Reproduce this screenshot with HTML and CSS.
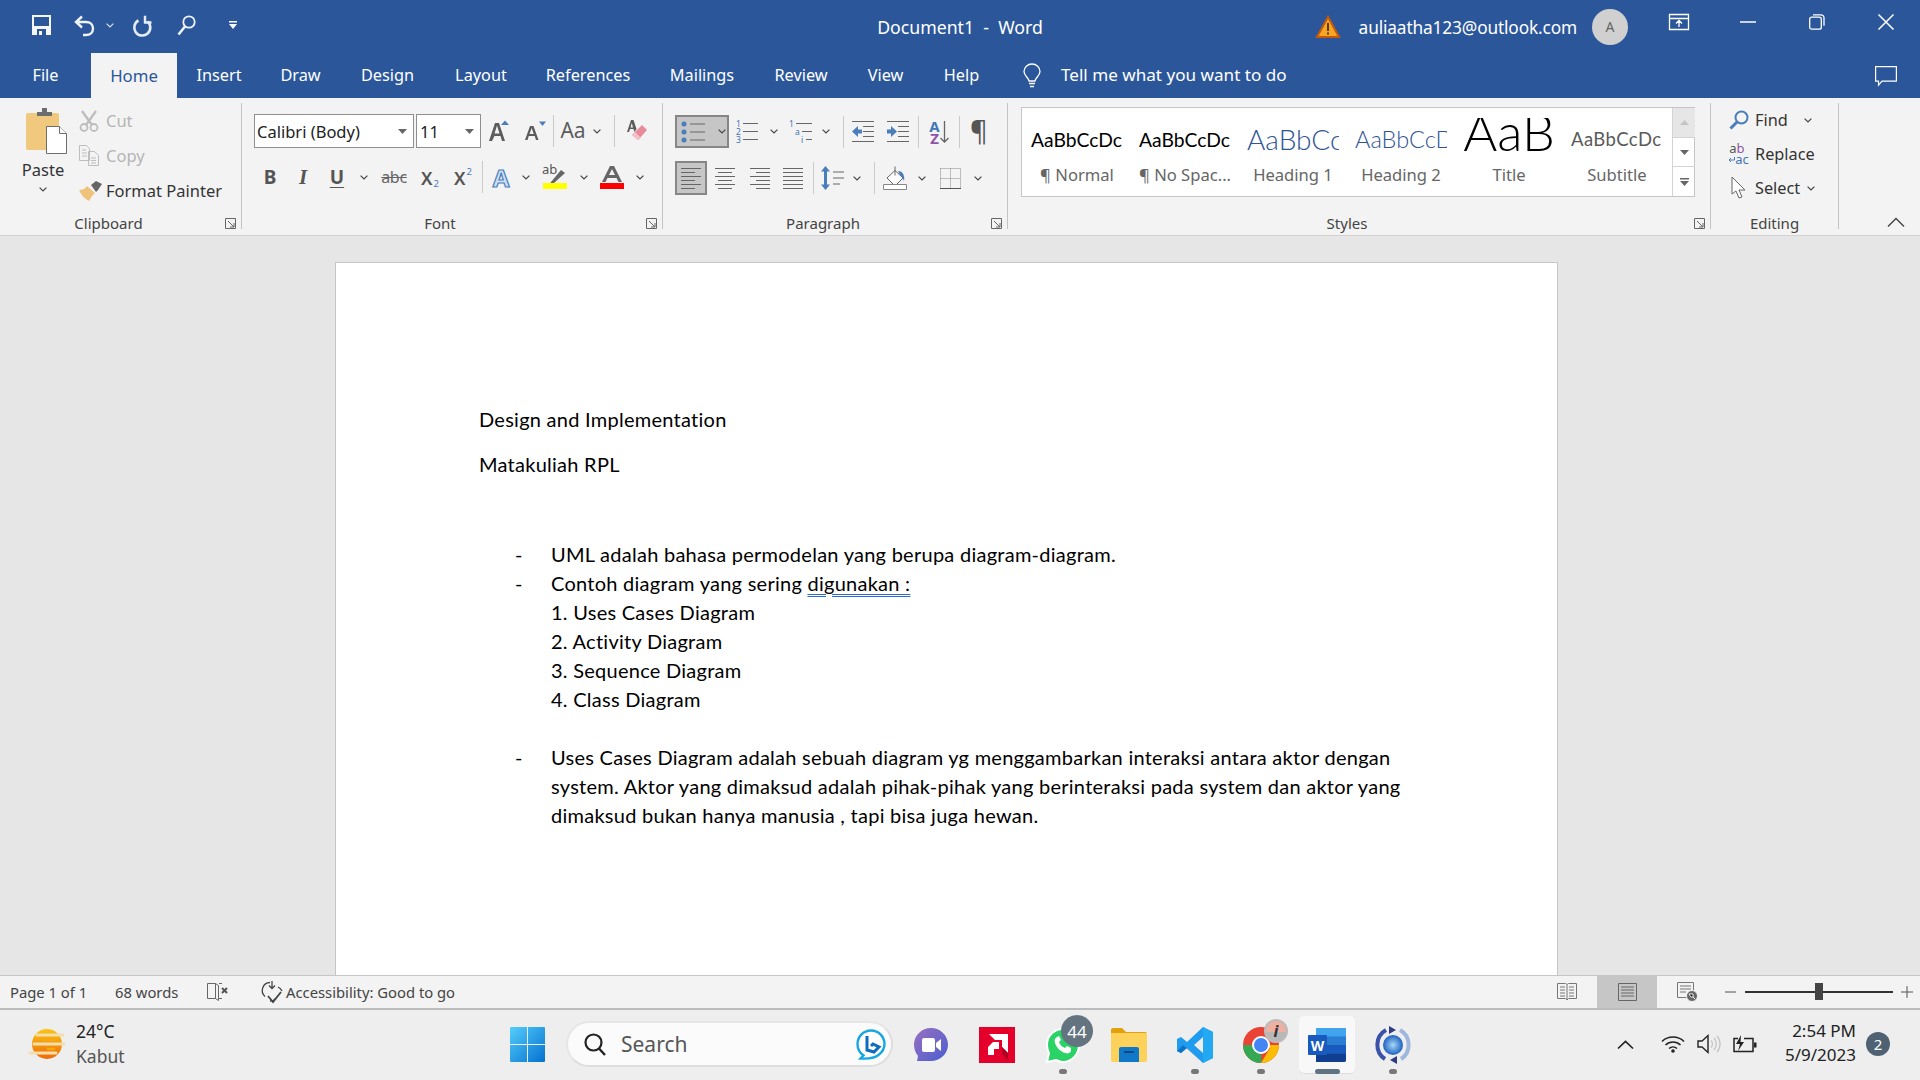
FILE: index.html
```html
<!DOCTYPE html>
<html lang="en">
<head>
<meta charset="utf-8">
<title>Document1 - Word</title>
<link rel="stylesheet" href="styles.css">
</head>
<body>
<svg class="sprite" aria-hidden="true">
  <symbol id="chev" viewBox="0 0 8 5"><path d="M.6.6 4 4 7.4.6" fill="none" stroke="#444" stroke-width="1.2"/></symbol>
  <symbol id="launch" viewBox="0 0 11 11"><path d="M.5 10.5V.5h10v10zM3 3l6 6M9 5v4H5" fill="none" stroke="#666"/></symbol>
  <symbol id="tri" viewBox="0 0 9 5"><path d="M0 0h9L4.5 5z" fill="#666"/></symbol>
</svg>

<header class="titlebar">
  <div class="title-row">
    <div class="qat">
      <svg width="19" height="20" viewBox="0 0 19 20"><path d="M0 0h19v20H0z" fill="#f4f6fa"/><path d="M2 2h15v9H2z" fill="#2b579a"/><path d="M5 14h9v6H5z" fill="#2b579a"/><path d="M7 16h3v4H7z" fill="#f4f6fa"/></svg>
      <svg class="q-undo" width="21" height="21" viewBox="0 0 21 21"><path d="M8 1.500 2 7l6 5.500M2 7h10c4 0 7 2.500 7 6.500S16 20 12 20H9" fill="none" stroke="#f0f3f9" stroke-width="2.400"/></svg>
      <svg class="q-chevw" width="8" height="5" viewBox="0 0 8 5"><path d="M.6.6 4 4 7.400.6" fill="none" stroke="#dce6f4" stroke-width="1.100"/></svg>
      <svg class="q-redo" width="20" height="21" viewBox="0 0 20 21"><path d="M6.500 5.500A8 8 0 1 0 15.500 6.500" fill="none" stroke="#e6ecf6" stroke-width="2.600"/><path d="M13 .8v6.700h6.500" fill="none" stroke="#e6ecf6" stroke-width="2.400"/></svg>
      <svg class="q-find" width="19" height="21" viewBox="0 0 19 21"><circle cx="12" cy="7" r="5.700" fill="none" stroke="#f0f3f9" stroke-width="1.800"/><path d="M8 11.500 1.500 19.500" stroke="#f0f3f9" stroke-width="2.600"/></svg>
      <svg class="q-more" width="8" height="8" viewBox="0 0 8 8"><path d="M0 0h8v1.500H0zM0 3h8L4 8z" fill="#fff"/></svg>
    </div>
    <div class="doc-title">Document1&nbsp; -&nbsp; Word</div>
    <div class="account">
      <svg class="warn" width="24" height="22" viewBox="0 0 24 22"><path d="M12 1 23 21H1z" fill="#f5a623" stroke="#c8590b" stroke-width="2"/><path d="M11 7h2v8h-2zM11 16.500h2v2h-2z" fill="#5a3a12"/></svg>
      <span class="email">auliaatha123@outlook.com</span>
      <span class="avatar">A</span>
      <span class="win-btn"><svg width="20" height="16" viewBox="0 0 20 16"><path d="M.5 .5h19v15H.5zM0 4.500h20M10 13V7M7 9.500l3-3 3 3" fill="none" stroke="#fff" stroke-width="1.300"/></svg></span>
      <span class="win-btn"><svg width="16" height="2" viewBox="0 0 16 2"><path d="M0 1h16" stroke="#fff" stroke-width="1.500"/></svg></span>
      <span class="win-btn"><svg width="16" height="16" viewBox="0 0 16 16"><rect x=".7" y="3.200" width="11.600" height="12" rx="2" fill="none" stroke="#fff" stroke-width="1.300"/><path d="M4 .8h8a3 3 0 0 1 3 3v8" fill="none" stroke="#fff" stroke-width="1.300"/></svg></span>
      <span class="win-btn"><svg width="16" height="16" viewBox="0 0 16 16"><path d="M.5.5l15 15M15.500.5l-15 15" stroke="#fff" stroke-width="1.500"/></svg></span>
    </div>
  </div>
  <nav class="tab-row">
    <span class="tab tab-file">File</span>
    <span class="tab tab-home">Home</span>
    <span class="tab tab-insert">Insert</span>
    <span class="tab tab-draw">Draw</span>
    <span class="tab tab-design">Design</span>
    <span class="tab tab-layout">Layout</span>
    <span class="tab tab-refs">References</span>
    <span class="tab tab-mail">Mailings</span>
    <span class="tab tab-review">Review</span>
    <span class="tab tab-view">View</span>
    <span class="tab tab-help">Help</span>
    <svg class="bulb" width="18" height="24" viewBox="0 0 18 24"><path d="M6 17c0-3-5-5-5-9.500a8 7.500 0 0 1 16 0C17 12 12 14 12 17z" fill="none" stroke="#fff" stroke-width="1.300"/><path d="M6 19.500h6M7 22.500h4" stroke="#fff" stroke-width="1.500"/></svg>
    <span class="tell">Tell me what you want to do</span>
    <svg class="comment" width="22" height="20" viewBox="0 0 22 20"><path d="M.6.6h20.800v14.500H7l-3.500 4v-4H.6z" fill="none" stroke="#fff" stroke-width="1.200"/></svg>
  </nav>
</header>

<section class="ribbon">
  <div class="group g-clip">
    <div class="clip-body">
      <div class="paste">
        <svg class="paste-ico" width="42" height="46" viewBox="0 0 42 46"><rect y="5" width="33" height="37" rx="2" fill="#f0c97e"/><path d="M11 8V4h5V0h5v4h5v4z" fill="#6d6d6d"/><path d="M20.500 18.500h13l7 7v20h-20z" fill="#fff" stroke="#6d6d6d"/><path d="M33.500 18.500v7h7" fill="#fff" stroke="#6d6d6d"/></svg>
        <span class="paste-label">Paste</span>
        <svg class="chev"><use href="#chev"/></svg>
      </div>
      <div class="clip-list">
        <div class="clip-row dim"><span class="clip-ico"><svg width="20" height="22" viewBox="0 0 20 22"><path d="M3 1l10 14M17 1 7 15" stroke="#bdbdbd" stroke-width="2.200"/><circle cx="5" cy="17.500" r="3.500" fill="none" stroke="#bdbdbd" stroke-width="1.800"/><circle cx="15" cy="17.500" r="3.500" fill="none" stroke="#bdbdbd" stroke-width="1.800"/></svg></span>Cut</div>
        <div class="clip-row dim"><span class="clip-ico"><svg width="20" height="21" viewBox="0 0 20 21"><path d="M.5.5h7l3 3v12H.5zM9.500 6.500h6l4 4v10h-10zM3 5h4M3 8h5M3 11h5M12 13h5M12 15.500h5M12 18h5" fill="#f3f3f3" stroke="#bdbdbd"/></svg></span>Copy</div>
        <div class="clip-row"><span class="clip-ico"><svg width="24" height="21" viewBox="0 0 24 21"><path d="M0 10c3 0 6-1 8-4l8 7c-3 2-4 5-6 8-4-2-8-6-10-11z" fill="#eec27a"/><path d="M12 5l5-4 6 3-4 6 -2 2z" fill="#666"/></svg></span>Format Painter</div>
      </div>
    </div>
    <div class="group-label">Clipboard</div>
    <svg class="launcher"><use href="#launch"/></svg>
  </div>

  <div class="group g-font">
    <div class="tool-row r1">
      <span class="combo c-font"><span>Calibri (Body)</span><svg class="tri"><use href="#tri"/></svg></span>
      <span class="combo c-size"><span>11</span><svg class="tri"><use href="#tri"/></svg></span>
      <span class="slot w36"><svg width="20" height="22" viewBox="0 0 20 22"><path d="M0 21 6 3h4l6 18h-3l-1.500-5h-6L3 21zM5.500 13.500h5L8 5.500z" fill="#5c5c5c"/><path d="M12 5l4-4.500L20 5z" fill="#4a7ebb"/></svg></span>
      <span class="slot w36"><svg width="22" height="20" viewBox="0 0 22 20"><path d="M1 19 6 5h3.500l5 14h-2.500l-1.300-4H4.800l-1.300 4zM5.500 13h4.200L7.700 7z" fill="#5c5c5c"/><path d="M15 .5h7L18.500 5z" fill="#4a7ebb"/></svg></span>
      <span class="vsep"></span>
      <span class="slot w34 aa">Aa</span>
      <span class="slot w18"><svg class="chev"><use href="#chev"/></svg></span>
      <span class="gap8"></span>
      <span class="vsep"></span>
      <span class="slot w44"><svg width="20" height="24" viewBox="0 0 20 24"><path d="M0 13 4 1h2.500l3 9-2 3-1-3H3l-1 3zM3.500 8.500h2.500L4.800 4z" fill="#5c5c5c"/><path d="M15 6l5 5-9 10-6-5z" fill="#e88a99"/><path d="M8 13l6 6-3 2-6-5z" fill="#f3c0c8"/></svg></span>
    </div>
    <div class="tool-row r2">
      <span class="slot w32 t-b">B</span>
      <span class="slot w32 t-i">I</span>
      <span class="slot w38 t-u">U</span>
      <span class="slot w16"><svg class="chev"><use href="#chev"/></svg></span>
      <span class="slot w44 t-s">abc</span>
      <span class="slot w28 t-x">X<span class="sub">2</span></span>
      <span class="slot w38 t-x">X<span class="sup">2</span></span>
      <span class="vsep"></span>
      <span class="slot w36 t-effect">A</span>
      <span class="slot w14"><svg class="chev"><use href="#chev"/></svg></span>
      <span class="slot w44 hl"><span class="hl-ab">ab</span><svg width="24" height="24" viewBox="0 0 24 24"><path d="M8 17 18 5l4 3-11 10-4 1z" fill="#666"/><path d="M0 18h24v6H0z" fill="#ff0"/></svg></span>
      <span class="slot w14"><svg class="chev"><use href="#chev"/></svg></span>
      <span class="slot w42"><svg width="24" height="24" viewBox="0 0 24 24"><path d="M2 17 10 1h4l8 16h-3.500l-2-4H7.500l-2 4zM9 10h6l-3-6z" fill="#666"/><path d="M0 18h24v6H0z" fill="#f00"/></svg></span>
      <span class="slot w14"><svg class="chev"><use href="#chev"/></svg></span>
    </div>
    <div class="group-label">Font</div>
    <svg class="launcher"><use href="#launch"/></svg>
  </div>

  <div class="group g-para">
    <div class="tool-row r1 r1p">
      <span class="sel-btn bullets">
        <svg width="28" height="24" viewBox="0 0 28 24"><g fill="#4a7ebb"><circle cx="4" cy="4" r="2.500"/><circle cx="4" cy="12" r="2.500"/><circle cx="4" cy="20" r="2.500"/></g><path d="M10 4h15M10 12h15M10 20h15" stroke="#666"/></svg>
        <svg class="chev"><use href="#chev"/></svg>
      </span>
      <span class="slot w36"><svg width="23" height="24" viewBox="0 0 23 24"><g class="num"><text x="0" y="7">1</text><text x="0" y="15">2</text><text x="0" y="23">3</text></g><path d="M7 3.500h15M7 11.500h15M7 19.500h15" stroke="#666"/></svg></span>
      <span class="slot w18"><svg class="chev"><use href="#chev"/></svg></span>
      <span class="slot w36"><svg width="24" height="24" viewBox="0 0 24 24"><g class="num"><text x="0" y="7">1</text><text x="6" y="15">a</text><text x="12" y="23">i</text></g><path d="M7 3.500h16M13 11.500h10M17 19.500h6" stroke="#666"/></svg></span>
      <span class="slot w14"><svg class="chev"><use href="#chev"/></svg></span>
      <span class="gap10"></span>
      <span class="vsep"></span>
      <span class="slot w37"><svg width="22" height="21" viewBox="0 0 22 21"><path d="M0 .5h22M11 5.500h11M11 10.500h11M11 15.500h11M0 20.500h22" stroke="#666"/><path d="M0 10.500 6 5v3.500h4v4H6V16z" fill="#4a7ebb"/></svg></span>
      <span class="slot w34"><svg width="22" height="21" viewBox="0 0 22 21"><path d="M0 .5h22M11 5.500h11M11 10.500h11M11 15.500h11M0 20.500h22" stroke="#666"/><path d="M10 10.500 4 5v3.500H0v4h4V16z" fill="#4a7ebb"/></svg></span>
      <span class="gap3"></span>
      <span class="vsep"></span>
      <span class="slot w40 sort"><span class="sort-t"><span class="sort-a">A</span><span class="sort-z">Z</span></span><svg width="9" height="22" viewBox="0 0 9 22"><path d="M4.500 0v21M.5 17l4 4 4-4" fill="none" stroke="#666" stroke-width="1.300"/></svg></span>
      <span class="vsep"></span>
      <span class="slot w40 pilcrow">¶</span>
    </div>
    <div class="tool-row r2 r2p">
      <span class="sel-btn aleft"><svg width="20" height="21" viewBox="0 0 20 21"><path d="M0 .5h20M0 4.500h14M0 8.500h20M0 12.500h14M0 16.500h20M0 20.500h14" stroke="#666"/></svg></span>
      <span class="slot w36"><svg width="20" height="21" viewBox="0 0 20 21"><path d="M0 .5h20M3 4.500h14M0 8.500h20M3 12.500h14M0 16.500h20M3 20.500h14" stroke="#666"/></svg></span>
      <span class="slot w33"><svg width="20" height="21" viewBox="0 0 20 21"><path d="M0 .5h20M6 4.500h14M0 8.500h20M6 12.500h14M0 16.500h20M6 20.500h14" stroke="#666"/></svg></span>
      <span class="slot w34"><svg width="20" height="21" viewBox="0 0 20 21"><path d="M0 .5h20M0 4.500h20M0 8.500h20M0 12.500h20M0 16.500h20M0 20.500h20" stroke="#666"/></svg></span>
      <span class="gap3"></span>
      <span class="vsep"></span>
      <span class="slot w37"><svg width="23" height="24" viewBox="0 0 23 24"><path d="M4.500 0 9 5.500H6v13h3L4.500 24 0 18.500h3v-13H0z" fill="#4a7ebb"/><path d="M12 6h11M12 12h11M12 18h7" stroke="#666"/></svg></span>
      <span class="slot w12"><svg class="chev"><use href="#chev"/></svg></span>
      <span class="gap11"></span>
      <span class="vsep"></span>
      <span class="slot w40"><svg width="24" height="24" viewBox="0 0 24 24"><path d="M12 4.500 20 12l-8 8-8-8z" fill="#fff" stroke="#666"/><path d="M12 .5v9" stroke="#666"/><path d="M15 5c5 0 7 5 6 10-1-3-3-5-4-6z" fill="#4a7ebb"/><path d="M.5 18.500h23v5H.5z" fill="#fff" stroke="#888"/></svg></span>
      <span class="slot w14"><svg class="chev"><use href="#chev"/></svg></span>
      <span class="slot w43"><svg width="21" height="21" viewBox="0 0 21 21"><path d="M.5.500h20M.5 10.500h20M10.500 .5v20M.5.500v20M20.500.500v20" fill="none" stroke="#888" stroke-dasharray="1 1"/><path d="M0 20.500h21" stroke="#555"/></svg></span>
      <span class="slot w12"><svg class="chev"><use href="#chev"/></svg></span>
    </div>
    <div class="group-label">Paragraph</div>
    <svg class="launcher"><use href="#launch"/></svg>
  </div>

  <div class="group g-styles">
    <div class="gallery">
      <div class="style-cell"><div class="sample s-normal">AaBbCcDc</div><div class="style-name">¶ Normal</div></div>
      <div class="style-cell"><div class="sample s-normal">AaBbCcDc</div><div class="style-name">¶ No Spac...</div></div>
      <div class="style-cell"><div class="sample s-h1">AaBbCcDd</div><div class="style-name">Heading 1</div></div>
      <div class="style-cell"><div class="sample s-h2">AaBbCcDd</div><div class="style-name">Heading 2</div></div>
      <div class="style-cell"><div class="sample s-title">AaB</div><div class="style-name">Title</div></div>
      <div class="style-cell"><div class="sample s-sub">AaBbCcDc</div><div class="style-name">Subtitle</div></div>
      <div class="gallery-scroll">
        <span class="gs gs-up"><svg width="9" height="5" viewBox="0 0 9 5"><path d="M0 5h9L4.500 0z" fill="#c4c4c4"/></svg></span>
        <span class="gs"><svg class="tri"><use href="#tri"/></svg></span>
        <span class="gs gs-more"><svg width="9" height="8" viewBox="0 0 9 8"><path d="M0 0h9v1.500H0zM0 3h9L4.500 8z" fill="#666"/></svg></span>
      </div>
    </div>
    <div class="group-label">Styles</div>
    <svg class="launcher"><use href="#launch"/></svg>
  </div>

  <div class="group g-edit">
    <div class="edit-list">
      <div class="edit-row"><span class="edit-ico"><svg width="20" height="20" viewBox="0 0 20 20"><circle cx="12.500" cy="7.500" r="6" fill="#f3f3f3" stroke="#4a7ebb" stroke-width="2"/><path d="M8 12 1.500 18.500" stroke="#4a7ebb" stroke-width="3"/></svg></span>Find<svg class="chev chev-find"><use href="#chev"/></svg></div>
      <div class="edit-row"><span class="edit-ico"><span class="repl"><span class="repl-t"><span class="ab-a">a</span><span class="ab-b">b</span></span><span class="repl-b"><svg width="7" height="6" viewBox="0 0 7 6"><path d="M6.500 0v3H1M3 1 1 3l2 2" fill="none" stroke="#4a7ebb"/></svg><span class="ab-c">ac</span></span></span></span>Replace</div>
      <div class="edit-row"><span class="edit-ico"><svg width="16" height="24" viewBox="0 0 16 24"><path d="M1 1v17l4-3 3 7 3-1-3-7h6z" fill="#fff" stroke="#666"/></svg></span>Select<svg class="chev chev-sel"><use href="#chev"/></svg></div>
    </div>
    <div class="group-label label-edit">Editing</div>
  </div>
  <svg class="collapse" width="18" height="10" viewBox="0 0 18 10"><path d="M1 9.500 9 1.500l8 8" fill="none" stroke="#444" stroke-width="1.400"/></svg>
</section>

<main class="workspace">
  <article class="page">
    <p class="para">Design and Implementation</p>
    <p class="para">Matakuliah RPL</p>
    <p class="para">&nbsp;</p>
    <ul class="doc-list">
      <li><span class="dash">-</span><span>UML adalah bahasa permodelan yang berupa diagram-diagram.</span></li>
      <li><span class="dash">-</span><span>Contoh diagram yang sering <span class="proof">digunakan :</span></span></li>
      <li><span class="dash"></span><span>1. Uses Cases Diagram</span></li>
      <li><span class="dash"></span><span>2. Activity Diagram</span></li>
      <li><span class="dash"></span><span>3. Sequence Diagram</span></li>
      <li><span class="dash"></span><span>4. Class Diagram</span></li>
      <li><span class="dash"></span><span>&nbsp;</span></li>
      <li><span class="dash">-</span><span>Uses Cases Diagram adalah sebuah diagram yg menggambarkan interaksi antara aktor dengan<br>system. Aktor yang dimaksud adalah pihak-pihak yang berinteraksi pada system dan aktor yang<br>dimaksud bukan hanya manusia , tapi bisa juga hewan.</span></li>
    </ul>
  </article>
</main>

<footer class="statusbar">
  <span class="st st-page">Page 1 of 1</span>
  <span class="st st-words">68 words</span>
  <svg class="st-proof" width="22" height="20" viewBox="0 0 22 20"><path d="M.5 1.500h8v15h-8zM8.500 1.500l3 2v15l-3-2M12 1.500h3M12 16.500h3" fill="none" stroke="#666"/><path d="M15 6l5 5M20 6l-5 5" stroke="#555" stroke-width="2"/></svg>
  <svg class="st-a11y" width="22" height="22" viewBox="0 0 22 22"><path d="M9 1.500a8 8 0 0 0-5 14M11 0v7M8 4.500l3 3 3-3M17 6a8 8 0 0 1 4 4M15 17a7 7 0 0 1-6 3" fill="none" stroke="#444" stroke-width="1.300"/><path d="M7 15l5 6 8-10" fill="none" stroke="#444" stroke-width="1.800"/></svg>
  <span class="st st-a11y-t">Accessibility: Good to go</span>
  <div class="view-tools">
    <span class="view"><svg width="20" height="18" viewBox="0 0 20 18"><path d="M.5 .5h8l1.500 1 1.500-1h8v15h-8L10 17l-1.500-1.500h-8zM10 2v14M3 4h5M3 7h5M3 10h5M3 13h5M12 4h5M12 7h5M12 10h5M12 13h5" fill="none" stroke="#777"/></svg></span>
    <span class="view view-on"><svg width="19" height="18" viewBox="0 0 19 18"><path d="M.5.500h18v17H.5zM3 4h13M3 7h13M3 10h13M3 13h13" fill="none" stroke="#666"/></svg></span>
    <span class="view"><svg width="21" height="20" viewBox="0 0 21 20"><path d="M.5.500h16v15H.5zM3 4h11M3 7h11M3 10h6" fill="none" stroke="#777"/><circle cx="15" cy="14" r="5.500" fill="#666" stroke="#f3f3f3"/><path d="M12 12h4v3h-2zM16 15l2 2" stroke="#f3f3f3"/></svg></span>
    <svg class="z-minus" width="11" height="2" viewBox="0 0 11 2"><path d="M0 1h11" stroke="#555"/></svg>
    <span class="slider"><span class="thumb"></span></span>
    <svg class="z-plus" width="12" height="12" viewBox="0 0 12 12"><path d="M0 6h12M6 0v12" stroke="#555"/></svg>
  </div>
</footer>

<div class="taskbar">
  <div class="weather">
    <svg width="36" height="32" viewBox="0 0 36 32">
      <defs><linearGradient id="sun" x1="0" y1="0" x2="0" y2="1"><stop offset="0" stop-color="#fbc413"/><stop offset="1" stop-color="#ee6a08"/></linearGradient></defs>
      <circle cx="18" cy="15" r="15" fill="url(#sun)"/>
      <path d="M8 6h26M5 15h30M1 24h26" stroke="#f3dfae" stroke-width="3" stroke-linecap="round"/>
      <path d="M14 11h12M18 20h8" stroke="#f8a80f" stroke-width="2.500"/>
    </svg>
    <div class="w-text"><span class="w-temp">24°C</span><span class="w-name">Kabut</span></div>
  </div>
  <svg class="start" width="35" height="35" viewBox="0 0 35 35">
    <defs><linearGradient id="wi" x1="0" y1="0" x2="1" y2="1"><stop offset="0" stop-color="#56cdfb"/><stop offset="1" stop-color="#0271d0"/></linearGradient></defs>
    <path d="M1 0h16v17H0V1a1 1 0 0 1 1-1zM18 0h16a1 1 0 0 1 1 1v16H18zM0 18h17v17H1a1 1 0 0 1-1-1zM18 18h17v16a1 1 0 0 1-1 1H18z" fill="url(#wi)"/>
  </svg>
  <div class="search-pill">
    <svg width="22" height="23" viewBox="0 0 22 23"><circle cx="9.500" cy="9.500" r="8" fill="none" stroke="#222" stroke-width="2.200"/><path d="M15 15.500l6 6.500" stroke="#222" stroke-width="2.400"/></svg>
    <span class="search-t">Search</span>
    <svg class="bing" width="30" height="31" viewBox="0 0 30 31"><path d="M15 1.500C7 1.500 1.500 8 1.500 15c0 5 2.500 9 6 11.500l-3 3c8 .5 14-.5 18-3.500 4-3 6-7 6-11C28.500 8 23 1.500 15 1.500z" fill="#fff" stroke="#16a7e0" stroke-width="2.400"/><path d="M11 7v14l7 2 5-5-6-3-2 2" fill="none" stroke="#0f6cbd" stroke-width="3"/></svg>
  </div>
  <div class="apps">
    <span class="app"><svg width="34" height="35" viewBox="0 0 34 35"><defs><linearGradient id="meet" x1="0" y1="0" x2="1" y2="1"><stop offset="0" stop-color="#9a6fc0"/><stop offset="1" stop-color="#4a5fd0"/></linearGradient></defs><path d="M17 0c9.400 0 17 7.600 17 16.500C34 26 26 33 17 33H3l1-5C1.500 25 0 21 0 16.500 0 7.600 7.600 0 17 0z" fill="url(#meet)"/><rect x="8" y="10" width="13" height="14" rx="2" fill="#fff"/><path d="M22 15l5-4v12l-5-4z" fill="#fff"/></svg></span>
    <span class="app"><svg width="36" height="36" viewBox="0 0 36 36"><path d="M0 0h36v36H0z" fill="#e4002b"/><path d="M10 7h19v19l-6-6V13H16zM9 20l5-5h6v7h-5v6H9z" fill="#fff"/><path d="M23 20l6 6v7l-6-6z" fill="#b00022"/></svg></span>
    <span class="app"><svg width="34" height="36" viewBox="0 0 34 36"><path d="M17 2C8 2 1 9 1 18c0 3 1 6 2 8L1 35l9-2c2 1 5 2 7 2 9 0 16-8 16-17S26 2 17 2z" fill="#29d366" stroke="#fff" stroke-width="2"/><path d="M11 10c-2 1-3 3-2 6 1 4 6 9 10 10 3 1 5 0 6-2v-3l-4-2-2 2c-3-1-5-3-6-6l2-2-2-4z" fill="#fff"/></svg><span class="count">44</span></span>
    <span class="app"><svg width="36" height="34" viewBox="0 0 36 34"><path d="M0 2a2 2 0 0 1 2-2h9l4 4h19a2 2 0 0 1 2 2v4H0z" fill="#e2a10b"/><path d="M0 5h36v27a2 2 0 0 1-2 2H2a2 2 0 0 1-2-2z" fill="#fcd25b"/><path d="M8 21a2 2 0 0 1 2-2h16a2 2 0 0 1 2 2v13H8z" fill="#0f78c9"/><path d="M13 24h10" stroke="#07497e" stroke-width="2"/></svg></span>
    <span class="app"><svg width="36" height="36" viewBox="0 0 36 36"><path d="M26 0l10 5v26l-10 5-16-15 -6 5-4-2V12l4-2 6 5zM26 10l-9 8 9 8z" fill="#1f9cf0"/><path d="M26 0l10 5v26l-10 5z" fill="#23a9f2"/><path d="M26 36 10 21l-6 5-4-2 6-6z" fill="#0b74c5"/></svg></span>
    <span class="app"><svg width="38" height="38" viewBox="0 0 38 38"><circle cx="19" cy="19" r="18" fill="#ea4335"/><path d="M19 19 3.500 28A18 18 0 0 0 19 37l.5-1z" fill="#34a853"/><path d="M19 19h18a18 18 0 0 1-18 18L28 22z" fill="#fbbc05"/><path d="M1 19a18 18 0 0 0 9 15l9-15z" fill="#34a853"/><circle cx="19" cy="19" r="8" fill="#4285f4" stroke="#fff" stroke-width="2"/></svg><span class="info">i</span></span>
    <span class="app app-active"><svg width="38" height="34" viewBox="0 0 38 34"><path d="M8 0h28a2 2 0 0 1 2 2v30a2 2 0 0 1-2 2H8z" fill="#2b7cd3"/><path d="M8 0h30v8.500H8z" fill="#41a5ee"/><path d="M8 17h30v8.500H8z" fill="#185abd"/><path d="M8 25.500h30V32a2 2 0 0 1-2 2H8z" fill="#103f91"/><path d="M1 7h17a1 1 0 0 1 1 1v18a1 1 0 0 1-1 1H1a1 1 0 0 1-1-1V8a1 1 0 0 1 1-1z" fill="#185abd"/><text x="9.500" y="22.500" class="word-w">W</text></svg></span>
    <span class="app"><svg width="36" height="38" viewBox="0 0 36 38"><defs><radialGradient id="globe"><stop offset="0" stop-color="#a8d8f8"/><stop offset="1" stop-color="#1d62c0"/></radialGradient></defs><path d="M11 4A17 17 0 0 0 10 33" fill="none" stroke="#3a52a8" stroke-width="4"/><path d="M25 4a17 17 0 0 1 1 29" fill="none" stroke="#9db7dd" stroke-width="4"/><circle cx="18" cy="19" r="10" fill="url(#globe)"/><path d="M14 0v8l7-4zM22 30v8l-7-4z" fill="#323a80"/></svg></span>
  </div>
  <div class="tray">
    <span class="tray-slot w34"><svg width="17" height="9" viewBox="0 0 17 9"><path d="M1 8.500l7.500-7 7.500 7" fill="none" stroke="#222" stroke-width="1.700"/></svg></span>
    <span class="tray-slot w36 tray-wifi"><svg width="24" height="18" viewBox="0 0 24 18"><path d="M1 6.500a16 16 0 0 1 22 0M4.500 10a11 11 0 0 1 15 0M8 13.500a6 6 0 0 1 8 0" fill="none" stroke="#222" stroke-width="1.500"/><circle cx="12" cy="16" r="1.800" fill="#222"/></svg></span>
    <span class="tray-slot w36"><svg width="25" height="20" viewBox="0 0 25 20"><path d="M1 7h4l6-5.500v17L5 13H1z" fill="none" stroke="#222" stroke-width="1.400"/><path d="M14 6.500a5 5 0 0 1 0 7M17 4a9 9 0 0 1 0 12M20 2a12 12 0 0 1 0 16" fill="none" stroke="#c4c4c4" stroke-width="1.300"/></svg></span>
    <span class="tray-slot w36"><svg width="24" height="18" viewBox="0 0 24 18"><path d="M5 3.500H1v13h19V3.500H11" fill="none" stroke="#222" stroke-width="1.500"/><path d="M21 7.500h2.500v5H21z" fill="#222"/><path d="M8 0 3 9h4l-2 7 6-9H7.500z" fill="#222"/></svg></span>
    <div class="clock"><span>2:54 PM</span><span>5/9/2023</span></div>
    <span class="notif">2</span>
  </div>
</div>
</body>
</html>
```

FILE: styles.css
```css
* { box-sizing: border-box; }
html, body { margin: 0; height: 100%; }
body {
  width: 1920px; height: 1080px; overflow: hidden;
  display: flex; flex-direction: column;
  font-family: "Noto Sans", "Liberation Sans", sans-serif;
  color: #333; background: #e6e6e6;
}
.sprite { position: absolute; width: 0; height: 0; }
svg { flex: none; display: block; overflow: visible; }
.chev { width: 8px; height: 5px; }
.tri { width: 9px; height: 5px; }

/* title */
.titlebar { background: #2b579a; color: #fff; height: 98px; flex: none; }
.title-row { height: 53px; display: grid; grid-template-columns: 1fr auto 1fr; align-items: center; }
.qat { display: flex; align-items: center; padding-left: 32px; padding-bottom: 3px; }
.q-undo { margin-left: 23px; }
.q-chevw { margin-left: 11px; }
.q-redo { margin-left: 18px; }
.q-find { margin-left: 25px; }
.q-more { margin-left: 33px; }
.doc-title { font-size: 17.700px; }
.account { display: flex; align-items: center; justify-content: flex-end; }
.warn { margin-right: 19px; }
.email { font-size: 17.300px; padding-top: 2px; letter-spacing: -.15px; margin-right: 15px; }
.avatar { width: 36px; height: 36px; border-radius: 50%; background: #d0d0d0; color: #666; font-size: 14px; display: flex; align-items: center; justify-content: center; margin-right: 16px; }
.win-btn { width: 69px; height: 44px; display: flex; align-items: center; justify-content: center; margin-bottom: 9px; }
.win-btn:first-of-type { width: 71px; }
.tab-row { height: 45px; display: flex; align-items: center; font-size: 16.300px; }
.tab { height: 45px; display: flex; align-items: center; justify-content: center; flex: none; padding-bottom: 1px; }
.tab-file { width: 91px; }
.tab-home { width: 86px; background: #f3f3f3; color: #2b579a; font-size: 16.800px; }
.tab-insert { width: 84px; }
.tab-draw { width: 79px; }
.tab-design { width: 95px; }
.tab-layout { width: 92px; }
.tab-refs { width: 122px; }
.tab-mail { width: 106px; }
.tab-review { width: 92px; }
.tab-view { width: 77px; }
.tab-help { width: 75px; }
.bulb { margin-left: 24px; }
.tell { margin-left: 20px; font-size: 17.100px; padding-bottom: 2px; }
.comment { margin-left: auto; margin-right: 23px; }

/* ribbon */
.ribbon { flex: none; height: 138px; background: #f3f3f3; border-bottom: 1px solid #d2d2d2; padding: 5px 0 6px; display: flex; font-size: 15px; }
.group { position: relative; flex: none; height: 126px; border-right: 1px solid #c4c4c4; }
.g-clip { width: 242px; }
.g-font { width: 421px; padding-left: 12px; }
.g-para { width: 345px; padding-left: 12px; }
.g-styles { width: 703px; padding-left: 13px; }
.g-edit { width: 128px; padding-left: 16px; }
.group-label { position: absolute; left: 0; right: 24px; bottom: -2px; height: 16px; line-height: 16px; text-align: center; font-size: 15px; color: #444; }
.label-edit { right: 0; }
.launcher { position: absolute; right: 5px; bottom: 0; width: 11px; height: 11px; }

.clip-body { display: flex; }
.paste { width: 79px; flex: none; display: flex; flex-direction: column; padding-left: 26px; padding-top: 5px; position: relative; }
.paste-label { margin-left: -26px; width: 86px; text-align: center; font-size: 16.500px; line-height: 22px; margin-top: 5px; color: #333; }
.paste .chev { margin: 6px 0 0 13px; }
.clip-list { display: flex; flex-direction: column; }
.clip-row { height: 35px; display: flex; align-items: center; font-size: 16.500px; white-space: nowrap; }
.clip-row.dim { color: #b5b5b5; }
.clip-ico { width: 27px; flex: none; display: flex; align-items: center; }

.tool-row { display: flex; align-items: center; }
.r1 { height: 34px; margin-top: 11px; }
.r2 { height: 34px; margin-top: 12px; }
.r1p { margin-top: 12px; height: 33px; }
.r2p { margin-top: 13px; }
.slot { display: flex; align-items: center; justify-content: center; flex: none; height: 100%; }
.w12 { width: 12px; } .w14 { width: 14px; } .w16 { width: 16px; } .w18 { width: 18px; }
.w28 { width: 28px; } .w32 { width: 32px; } .w33 { width: 33px; } .w34 { width: 34px; }
.w36 { width: 36px; } .w37 { width: 37px; } .w38 { width: 38px; } .w40 { width: 40px; }
.w42 { width: 42px; } .w43 { width: 43px; } .w44 { width: 44px; }
.gap3 { width: 3px; flex: none; } .gap8 { width: 8px; flex: none; } .gap10 { width: 10px; flex: none; } .gap11 { width: 11px; flex: none; }
.vsep { width: 1px; height: 32px; background: #cacaca; flex: none; }

.combo { height: 34px; border: 1px solid #8f8f8f; background: #fff; display: flex; align-items: center; justify-content: space-between; padding: 0 6px 0 2px; font-size: 16.500px; color: #222; flex: none; }
.c-font { width: 160px; margin-right: 2px; }
.c-size { width: 65px; padding-left: 3px; }

.aa { font-size: 21px; color: #5c5c5c; padding-left: 4px; padding-bottom: 3px; }
.t-b { font-size: 19px; font-weight: 700; color: #555; }
.t-i { font-size: 21px; font-style: italic; font-weight: 700; color: #555; font-family: "Liberation Serif", serif; padding-left: 2px; }
.t-u { font-size: 19px; font-weight: 700; color: #555; text-decoration: underline; text-underline-offset: 3px; }
.t-s { font-size: 16px; color: #666; text-decoration: line-through; letter-spacing: -.3px; }
.t-x { font-size: 18px; font-weight: 600; color: #555; padding-top: 2px; }
.sub { font-size: 9.500px; color: #4a7ebb; align-self: flex-end; margin-bottom: 4px; margin-left: 1px; font-weight: 400; }
.sup { font-size: 9.500px; color: #4a7ebb; align-self: flex-start; margin-top: 3px; margin-left: 1px; font-weight: 400; }
.t-effect { font-size: 24px; font-weight: 700; color: #cfe0f5; -webkit-text-stroke: 1.200px #4a7ebb; }
.hl { position: relative; }
.hl-ab { position: absolute; left: 9px; top: 2px; font-size: 13px; line-height: 14px; color: #555; }

.sel-btn { background: #c6c6c6; border: 2px solid #868686; display: flex; align-items: center; flex: none; }
.bullets { width: 54px; height: 33px; padding-left: 3px; justify-content: flex-start; }
.bullets .chev { margin-left: 10px; }
.aleft { width: 32px; height: 34px; justify-content: center; }
.num text { font-size: 8.500px; fill: #3f76b8; font-family: "Noto Sans", sans-serif; }
.sort { gap: 0; }
.sort-t { display: flex; flex-direction: column; align-items: center; font-size: 15px; line-height: 12px; font-weight: 700; }
.sort-a { color: #3f76b8; }
.sort-z { color: #8e54a8; }
.pilcrow { font-size: 27px; color: #555; justify-content: flex-start; padding-left: 10px; padding-bottom: 3px; }

.gallery { width: 674px; height: 90px; margin-top: 4px; background: #fff; border: 1px solid #c6c6c6; display: flex; padding-left: 1px; }
.style-cell { width: 108px; flex: none; display: flex; flex-direction: column; align-items: center; }
.sample { width: 92px; height: 42px; margin-top: 10px; overflow: hidden; white-space: nowrap; display: flex; align-items: center; font-family: "Lato", sans-serif; color: #000; }
.s-normal { font-size: 19.300px; }
.s-h1 { font-size: 28px; color: #2f5496; font-weight: 300; }
.s-h2 { font-size: 23.500px; color: #2f5496; font-weight: 300; }
.s-title { font-size: 52px; font-weight: 300; justify-content: center; align-items: flex-start; line-height: 27px; }
.s-sub { font-size: 18.500px; color: #5a5a5a; letter-spacing: .4px; }
.style-name { font-size: 16.600px; line-height: 22px; color: #666; margin-top: 4px; white-space: nowrap; }
.gallery-scroll { width: 23px; margin-left: 1px; display: flex; flex-direction: column; border-left: 1px solid #d4d4d4; flex: none; }
.gs { flex: 1; display: flex; align-items: center; justify-content: center; border-bottom: 1px solid #d4d4d4; }
.gs:last-child { border-bottom: 0; }
.gs-up { background: #e6e6e6; }

.edit-list { display: flex; flex-direction: column; }
.edit-row { height: 34px; display: flex; align-items: center; font-size: 16.300px; }
.edit-ico { width: 28px; flex: none; display: flex; align-items: center; justify-content: center; padding-right: 5px; }
.chev-find { margin-left: 16px; }
.chev-sel { margin-left: 7px; }
.repl { display: flex; flex-direction: column; font-size: 13px; line-height: 11px; }
.repl-t { display: flex; padding-left: 1px; }
.repl-b { display: flex; align-items: center; }
.ab-a { color: #555; } .ab-b { color: #8e54a8; } .ab-c { color: #3f76b8; }
.collapse { align-self: flex-end; margin: 0 23px 2px 48px; }

/* document */
.workspace { flex: 1; min-height: 0; overflow: hidden; padding: 26px 0 0 335px; background: #e6e6e6; }
.page { width: 1223px; height: 800px; background: #fff; border: 1px solid #c6c6c6; padding: 142px 0 0 143px; font-family: "Lato", sans-serif; font-size: 20px; letter-spacing: .26px; line-height: 29px; color: #000; }
.para { margin: 0 0 16px; }
.doc-list { list-style: none; margin: 0; padding: 0 0 0 36px; }
.doc-list li { display: flex; white-space: nowrap; }
.dash { width: 36px; flex: none; }
.proof { text-decoration: underline double #2b6cd4; text-underline-offset: 3px; text-decoration-thickness: 1px; }

/* status */
.statusbar { flex: none; height: 35px; background: #f3f3f3; border-top: 1px solid #c6c6c6; border-bottom: 2px solid #bcbcbc; display: flex; align-items: center; font-size: 14.800px; color: #444; }
.st { white-space: nowrap; }
.st-page { margin-left: 10px; width: 105px; }
.st-words { width: 92px; }
.st-a11y { margin-left: 32px; }
.st-a11y-t { margin-left: 3px; }
.view-tools { margin-left: auto; display: flex; align-items: center; height: 32px; }
.view { width: 60px; height: 32px; display: flex; align-items: center; justify-content: center; }
.view-on { background: #c6c6c6; }
.z-minus { margin: 0 9px 0 8px; }
.slider { width: 148px; height: 2px; background: #333; position: relative; display: block; }
.thumb { position: absolute; left: 70px; top: -8px; width: 8px; height: 17px; background: #444; }
.z-plus { margin: 0 7px 0 8px; }

/* taskbar */
.taskbar { flex: none; height: 70px; background: #eeeeee; display: flex; align-items: center; }
.weather { width: 510px; flex: none; display: flex; align-items: center; padding-left: 29px; }
.w-text { margin-left: 11px; margin-bottom: 2px; display: flex; flex-direction: column; }
.w-temp { font-size: 17.500px; line-height: 25px; color: #222; }
.w-name { font-size: 17.500px; line-height: 25px; color: #555; }
.start { margin-bottom: 1px; }
.search-pill { width: 327px; height: 46px; margin-left: 21px; border: 2px solid #dedede; border-left-color: #e6e6e6; border-top-color: #e6e6e6; border-radius: 23px; background: #fbfbfb; display: flex; align-items: center; padding-left: 16px; margin-bottom: 2px; }
.search-t { font-size: 21px; color: #555; margin-left: 15px; }
.bing { margin-left: auto; margin-right: 5px; }
.apps { display: flex; margin-left: 5px; }
.app { width: 66px; height: 70px; position: relative; display: flex; align-items: center; justify-content: center; }
.app::after { content: ""; position: absolute; left: 29px; top: 59px; width: 8px; height: 5px; border-radius: 3px; background: #777; }
.app:nth-child(1)::after, .app:nth-child(2)::after, .app:nth-child(4)::after { display: none; }
.app-active::before { content: ""; position: absolute; left: 5px; top: 6px; width: 56px; height: 57px; border-radius: 5px; background: #f8f8f8; border-bottom: 1px solid #ddd; }
.app-active svg { position: relative; }
.app-active::after { left: 21px; width: 25px; height: 5px; background: #5f7384; }
.word-w { font-family: "Noto Sans", sans-serif; font-size: 14px; font-weight: 700; fill: #fff; text-anchor: middle; }
.count { position: absolute; left: 31px; top: 5px; width: 32px; height: 32px; border-radius: 50%; background: #637480; color: #fff; font-size: 17px; display: flex; align-items: center; justify-content: center; }
.info { position: absolute; left: 36px; top: 9px; width: 24px; height: 24px; border-radius: 50%; background: linear-gradient(#eeb0a2 55%, #b8b8b8 55%); color: #333; font-size: 16px; font-style: italic; font-weight: 700; display: flex; align-items: center; justify-content: center; border: 2px solid #bbb; }
.tray { margin-left: auto; width: 312px; flex: none; display: flex; align-items: center; }
.tray-slot { display: flex; align-items: center; justify-content: center; flex: none; margin-bottom: 2px; }
.tray-wifi { margin-left: 13px; }
.clock { width: 93px; display: flex; flex-direction: column; align-items: flex-end; font-size: 17px; line-height: 24px; color: #222; flex: none; margin-bottom: 4px; }
.notif { width: 24px; height: 24px; margin-left: 10px; border-radius: 50%; background: #4e6273; color: #fff; font-size: 15px; display: flex; align-items: center; justify-content: center; margin-bottom: 2px; }
```
